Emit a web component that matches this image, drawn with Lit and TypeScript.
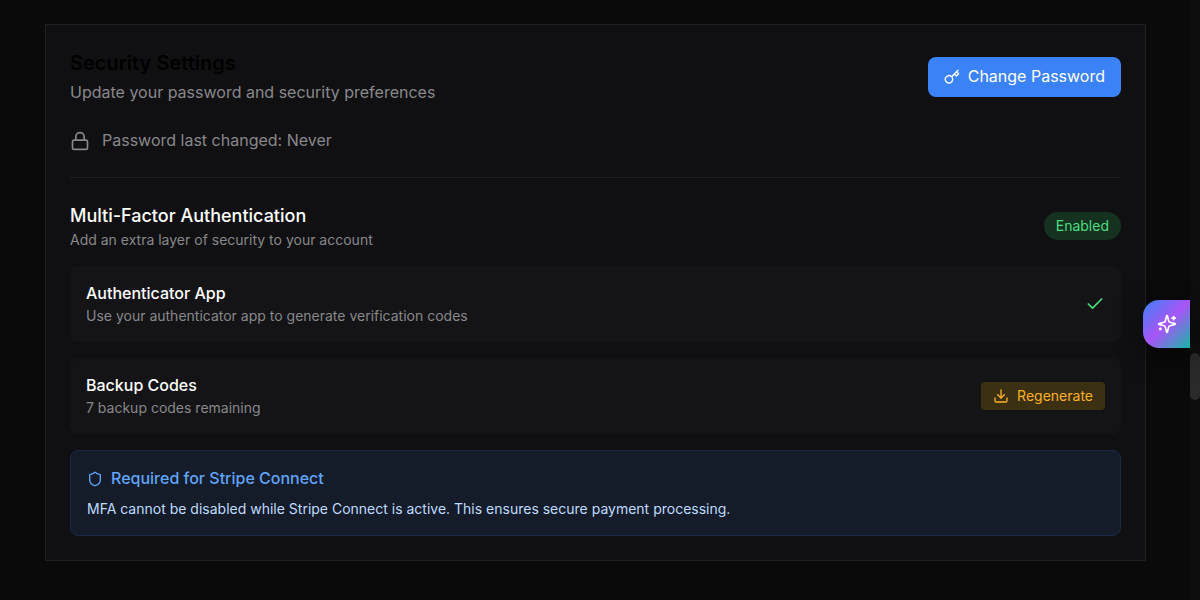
import { LitElement, html, css, svg } from "lit";
import { customElement } from "lit/decorators.js";

const icon = (size: number, body: unknown, stroke = 2) => html`
  <svg width=${size} height=${size} viewBox="0 0 24 24" fill="none" stroke="currentColor"
    stroke-width=${stroke} stroke-linecap="round" stroke-linejoin="round" aria-hidden="true">${body}</svg>`;

const lock = svg`<rect x="3" y="11" width="18" height="11" rx="2"/><path d="M7 11V7a5 5 0 0 1 10 0v4"/>`;
const key = svg`<path d="M21 2l-2 2m-7.61 7.61a5.5 5.5 0 1 1-7.778 7.778 5.5 5.5 0 0 1 7.777-7.777zm0 0L15.5 7.5m0 0l3 3L22 7l-3-3m-3.5 3.5L19 4"/>`;
const check = svg`<path d="M20 6 9 17l-5-5"/>`;
const download = svg`<path d="M21 15v4a2 2 0 0 1-2 2H5a2 2 0 0 1-2-2v-4"/><path d="m7 10 5 5 5-5"/><path d="M12 15V3"/>`;
const shield = svg`<path d="M20 13c0 5-3.5 7.5-7.66 8.95a1 1 0 0 1-.67-.01C7.5 20.5 4 18 4 13V6a1 1 0 0 1 1-1c2 0 4.5-1.2 6.24-2.72a1.17 1.17 0 0 1 1.52 0C14.51 3.81 17 5 19 5a1 1 0 0 1 1 1z"/>`;
const sparkles = svg`<path d="M9.937 15.5A2 2 0 0 0 8.5 14.063l-6.135-1.582a.5.5 0 0 1 0-.962L8.5 9.936A2 2 0 0 0 9.937 8.5l1.582-6.135a.5.5 0 0 1 .963 0L14.063 8.5A2 2 0 0 0 15.5 9.937l6.135 1.581a.5.5 0 0 1 0 .964L15.5 14.063a2 2 0 0 0-1.437 1.437l-1.582 6.135a.5.5 0 0 1-.963 0z"/><path d="M20 3v4"/><path d="M22 5h-4"/><path d="M4 17v2"/><path d="M5 18H3"/>`;

@customElement("app-root")
export class AppRoot extends LitElement {
  static styles = css`
    :host {
      display: flex;
      min-height: 100vh;
      background: #0a0a0a;
      color: #fff;
      font: 400 16px/22px Inter, sans-serif;
    }
    * { box-sizing: border-box; }
    h2, h3, h4, p { margin: 0; }
    svg { display: block; flex: none; }
    button { border: 0; font: inherit; cursor: pointer; }
    .page { flex: 1; min-width: 0; padding: 24px 24px 0 25px; }
    .card {
      max-width: 1101px;
      margin: 0 auto;
      padding: 24px;
      border: 1px solid #1f1f21;
      background: #101012;
    }
    .row { display: flex; align-items: center; justify-content: space-between; gap: 16px; }
    .title { font-size: 20px; line-height: 28px; font-weight: 600; color: #000; margin-bottom: 4px; }
    .muted { color: #88888a; }
    .body { padding-bottom: 2px; }
    .small { font-size: 14px; line-height: 20px; }
    .primary {
      display: flex; align-items: center; gap: 8px;
      padding: 8px 16px; border-radius: 8px;
      background: #3b82f6; color: #fff;
    }
    .changed { display: flex; align-items: center; gap: 12px; padding: 24px 0; }
    .mfa {
      display: flex; flex-direction: column; gap: 16px;
      padding-top: 24px; border-top: 1px solid #1f1f21;
    }
    .subtitle { font-size: 18px; line-height: 28px; font-weight: 500; }
    .badge {
      padding: 4px 12px; border-radius: 14px;
      background: #14321f; color: #4ade80;
      font-size: 14px; line-height: 20px;
    }
    .item { padding: 16px; border-radius: 8px; background: #141416; }
    .item-title { font-size: 16px; font-weight: 500; }
    .check { color: #4ade80; }
    .regenerate {
      display: flex; align-items: center; gap: 8px;
      padding: 4px 12px; border-radius: 4px;
      background: #3c3013; color: #fbb124;
      font-size: 14px; line-height: 20px;
    }
    .notice { padding: 16px; border: 1px solid #1a2a45; border-radius: 8px; background: #151c29; }
    .notice-title {
      display: flex; align-items: center; gap: 8px; margin-bottom: 8px;
      font-size: 16px; font-weight: 500; color: #60a5fa;
    }
    .notice-text { color: #bfdbfe; }
    .rail { width: 10px; background: #0e0e0e; }
    .thumb { position: fixed; top: 353px; right: 0; width: 10px; height: 47px; border-radius: 5px; background: #2a2a2a; }
    .assistant {
      position: fixed; right: 10px; top: 50%;
      display: grid; place-items: center;
      width: 47px; height: 48px; padding: 0;
      border-radius: 16px 0 0 16px;
      background: linear-gradient(135deg, #3b82f6, #a855f7 50%, #14b8a6);
      color: #fff;
      box-shadow: 0 8px 24px rgba(0, 0, 0, 0.5);
    }
  `;

  render() {
    return html`
      <main class="page">
        <section class="card">
          <header class="row">
            <div>
              <h2 class="title">Security Settings</h2>
              <p class="muted body">Update your password and security preferences</p>
            </div>
            <button class="primary">${icon(16, key)}<span class="body">Change Password</span></button>
          </header>
          <div class="changed muted">${icon(20, lock)}<span class="body">Password last changed: Never</span></div>
          <div class="mfa">
            <div class="row">
              <div>
                <h3 class="subtitle">Multi-Factor Authentication</h3>
                <p class="muted small">Add an extra layer of security to your account</p>
              </div>
              <span class="badge">Enabled</span>
            </div>
            <div class="item row">
              <div>
                <h4 class="item-title body">Authenticator App</h4>
                <p class="muted small">Use your authenticator app to generate verification codes</p>
              </div>
              <span class="check">${icon(20, check)}</span>
            </div>
            <div class="item row">
              <div>
                <h4 class="item-title body">Backup Codes</h4>
                <p class="muted small">7 backup codes remaining</p>
              </div>
              <button class="regenerate">${icon(16, download)}Regenerate</button>
            </div>
            <div class="notice">
              <h4 class="notice-title">${icon(16, shield)}<span class="body">Required for Stripe Connect</span></h4>
              <p class="notice-text small">MFA cannot be disabled while Stripe Connect is active. This ensures secure payment processing.</p>
            </div>
          </div>
        </section>
      </main>
      <div class="rail"><div class="thumb"></div></div>
      <button class="assistant" aria-label="Open assistant">${icon(20, sparkles)}</button>
    `;
  }
}
